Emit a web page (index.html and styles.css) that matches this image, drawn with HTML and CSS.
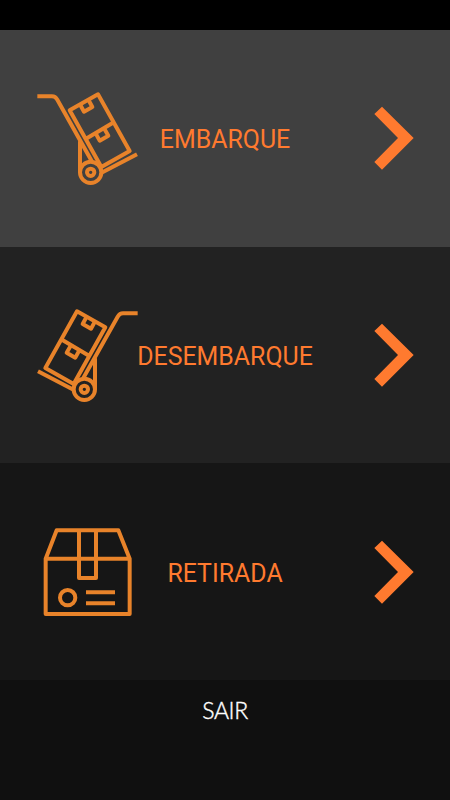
FILE: index.html
```
<!DOCTYPE html>
<html lang="pt-BR">
<head>
    <meta charset="UTF-8">
    <meta name="viewport" content="width=device-width, initial-scale=1.0">
    <title>Menu</title>
    <link rel="stylesheet" href="styles.css">
</head>
<body>
    <div class="status-bar"></div>
    <div class="menu">
        <a href="#" class="item embarque">
            <svg class="icon" viewBox="21 8 303 300">
                <g id="carrinho">
                    <path d="M22 33H66Q76 33 82 43L185 227M150 168V262"/>
                    <path d="M119 75L204 27L299 197L214 245ZM168 160L249 112"/>
                    <path d="M151 59L162 79L187 65L176 45M197 144L209 166L235 151L223 130"/>
                    <path d="M213 263L321 207"/>
                    <circle cx="182" cy="261" r="32"/>
                    <circle cx="182" cy="261" r="11"/>
                </g>
            </svg>
            <span class="label">EMBARQUE</span>
            <svg class="arrow" viewBox="26 19 120 192"><path d="M50 21L145 115L50 210L27 187L98 115L27 43Z"/></svg>
        </a>
        <a href="#" class="item desembarque">
            <svg class="icon flip" viewBox="21 8 303 300"><use href="#carrinho"/></svg>
            <span class="label">DESEMBARQUE</span>
            <svg class="arrow" viewBox="26 19 120 192"><path d="M50 21L145 115L50 210L27 187L98 115L27 43Z"/></svg>
        </a>
        <a href="#" class="item retirada">
            <svg class="icon" viewBox="6 5 303 300">
                <path d="M32 115L65 30H250L284 115V281H32ZM32 115H284"/>
                <path d="M132 30V173H183V30"/>
                <circle cx="98" cy="232" r="23"/>
                <path d="M153 216H240M153 249H240"/>
            </svg>
            <span class="label">RETIRADA</span>
            <svg class="arrow" viewBox="26 19 120 192"><path d="M50 21L145 115L50 210L27 187L98 115L27 43Z"/></svg>
        </a>
    </div>
    <a href="#" class="sair">SAIR</a>
</body>
</html>
```

FILE: styles.css
```
body {
    margin: 0;
    height: 100vh;
    display: flex;
    flex-direction: column;
    background: #101010;
    font-family: Roboto, sans-serif;
}
a {
    text-decoration: none;
}
.status-bar {
    height: 30px;
    background: #000;
}
.menu {
    height: 650px;
    display: grid;
    grid-template-rows: repeat(3, 1fr);
}
.item {
    display: grid;
    grid-template-columns: minmax(0, 1fr) auto minmax(0, 1fr);
    align-items: center;
    padding: 0 37px;
}
.embarque {
    background: #404040;
}
.desembarque {
    background: #222;
}
.retirada {
    background: #161616;
}
.icon {
    width: 101px;
    height: 100px;
    fill: none;
    stroke: #e8832a;
    stroke-width: 12;
    stroke-linejoin: round;
}
.flip {
    transform: scaleX(-1);
}
.label {
    padding-top: 4px;
    color: #ff7a2f;
    font-size: 24.9px;
    line-height: 30px;
}
.arrow {
    width: 40px;
    height: 64px;
    margin-right: -1px;
    justify-self: end;
    fill: #ff7a2f;
}
.sair {
    padding-top: 16px;
    color: #fff;
    font-family: Lato, sans-serif;
    font-size: 23px;
    font-weight: 300;
    line-height: 28px;
    letter-spacing: -0.4px;
    text-align: center;
    -webkit-text-stroke: 0.4px #fff;
}
```
